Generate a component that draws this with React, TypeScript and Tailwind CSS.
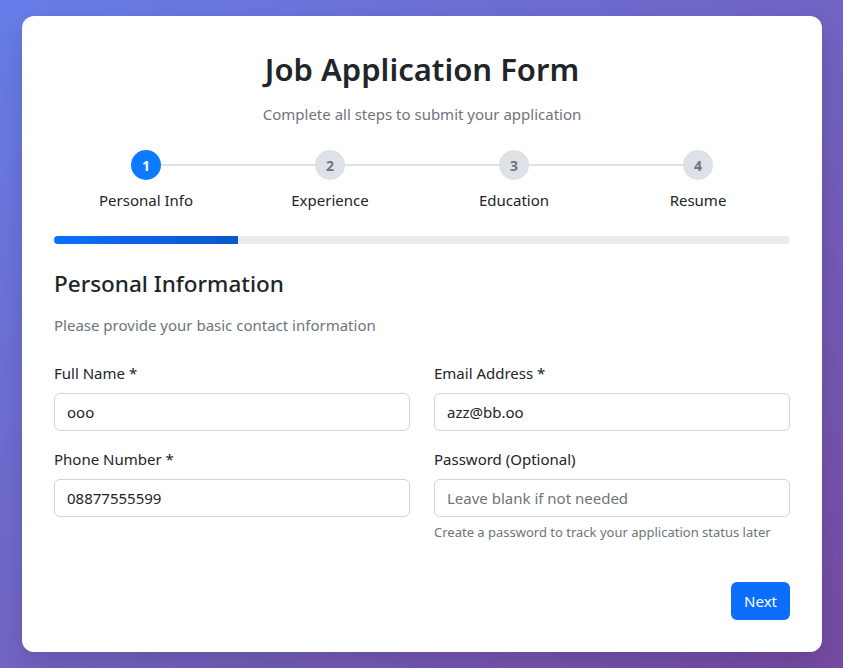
import { useState } from 'react'

const steps = ['Personal Info', 'Experience', 'Education', 'Resume']

function Field({
  label,
  value,
  placeholder,
  hint,
}: {
  label: string
  value?: string
  placeholder?: string
  hint?: string
}) {
  const [v, setV] = useState(value ?? '')
  return (
    <div className="flex flex-col">
      <label className="text-[15px] leading-[20px] text-[#212529] mb-[10px]">{label}</label>
      <input
        value={v}
        placeholder={placeholder}
        onChange={(e) => setV(e.target.value)}
        className="h-[38px] w-full rounded-[6px] border border-[#ced4da] bg-white px-[12px] text-[15px] text-[#212529] placeholder:text-[#6c757d] outline-none"
      />
      {hint && <p className="mt-[6px] text-[13px] leading-[18px] text-[#6c757d]">{hint}</p>}
    </div>
  )
}

export default function App() {
  return (
    <div
      className="min-h-[668px] w-full bg-gradient-to-br from-[#667eea] to-[#764ba2] px-[22px] pt-[16px] pb-[16px]"
      style={{ fontFamily: '"Noto Sans", "Open Sans", sans-serif' }}
    >
      <div className="mx-auto w-[800px] rounded-[12px] bg-white p-[32px] shadow-[0_10px_30px_rgba(0,0,0,0.15)]">
        <h1 className="mt-[1px] text-center text-[31px] leading-[40px] font-semibold text-[#212529]">
          Job Application Form
        </h1>
        <p className="mt-[15px] text-center text-[15px] leading-[20px] text-[#6c757d]">
          Complete all steps to submit your application
        </p>

        {/* stepper */}
        <div className="relative mt-[26px] grid grid-cols-4">
          <div className="absolute left-[92px] right-[92px] top-[14px] h-[2px] bg-[#dee2e6]" />
          {steps.map((s, i) => (
            <div key={s} className="relative flex flex-col items-center">
              <div
                className={
                  i === 0
                    ? 'flex h-[30px] w-[30px] items-center justify-center rounded-full bg-[#0d7bff] text-[14px] font-bold text-white'
                    : 'flex h-[30px] w-[30px] items-center justify-center rounded-full bg-[#dee2e6] text-[14px] font-bold text-[#6c757d]'
                }
              >
                {i + 1}
              </div>
              <span className="mt-[10px] text-[15px] leading-[20px] text-[#212529]">{s}</span>
            </div>
          ))}
        </div>

        {/* progress */}
        <div className="mt-[26px] h-[8px] w-full overflow-hidden rounded-full bg-[#e9ecef]">
          <div className="h-full w-1/4 bg-gradient-to-r from-[#0d6efd] to-[#0a58ca]" />
        </div>

        <h2 className="mt-[25px] text-[22.5px] leading-[30px] font-medium text-[#212529]">Personal Information</h2>
        <p className="mt-[16px] text-[15px] leading-[20px] text-[#6c757d]">
          Please provide your basic contact information
        </p>

        <div className="mt-[28px] grid grid-cols-2 gap-x-[24px] gap-y-[18px]">
          <Field label="Full Name *" value="ooo" />
          <Field label="Email Address *" value="azz@bb.oo" />
          <Field label="Phone Number *" value="08877555599" />
          <Field
            label="Password (Optional)"
            placeholder="Leave blank if not needed"
            hint="Create a password to track your application status later"
          />
        </div>

        <div className="mt-[41px] flex justify-end">
          <button className="h-[38px] rounded-[6px] bg-[#0d6efd] px-[13px] text-[15px] text-white">Next</button>
        </div>
      </div>
    </div>
  )
}
